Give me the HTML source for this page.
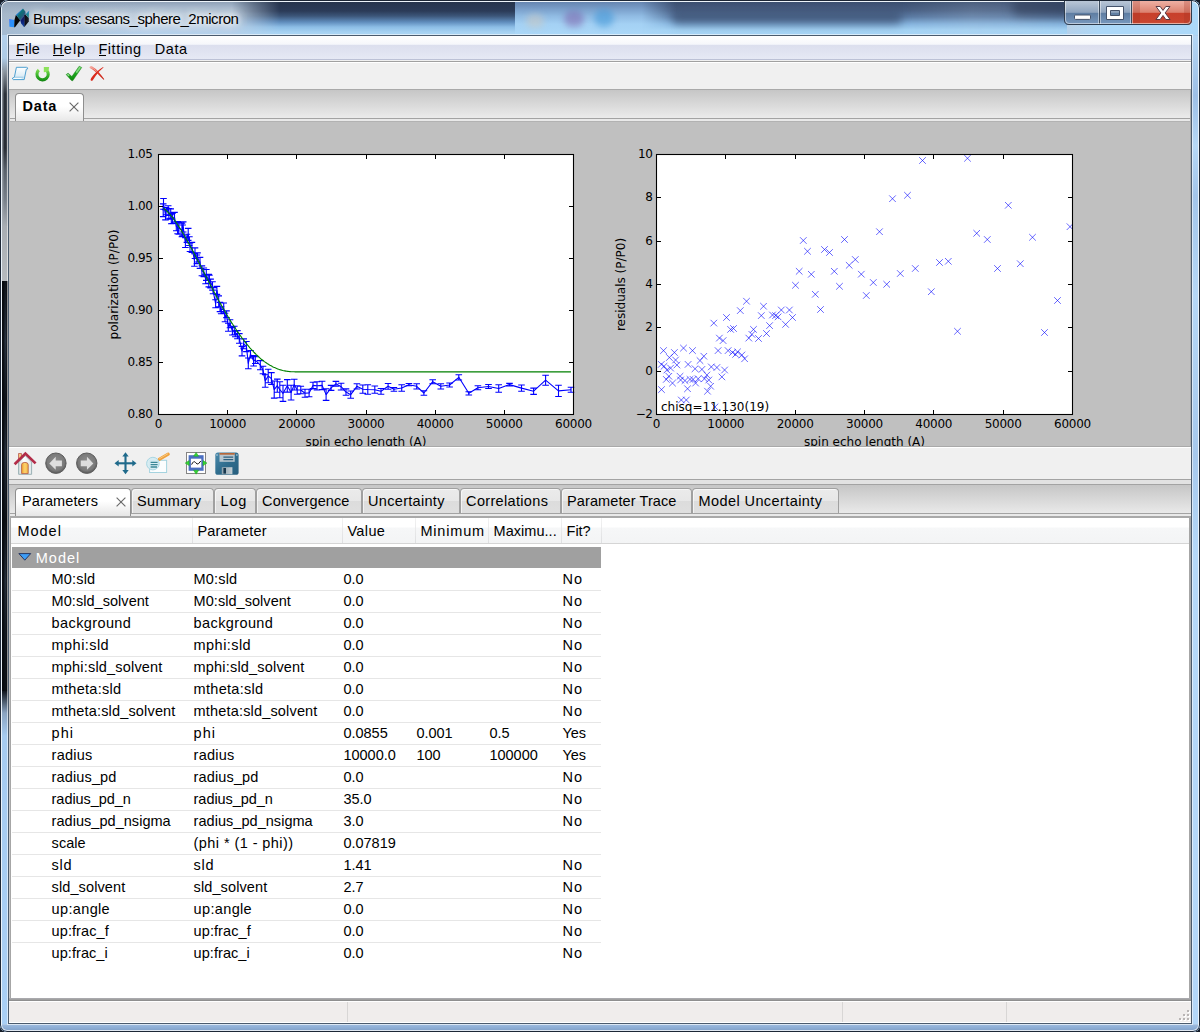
<!DOCTYPE html>
<html lang="en"><head><meta charset="utf-8"><title>Bumps: sesans_sphere_2micron</title>
<style>
*{box-sizing:border-box;margin:0;padding:0}
html,body{width:1200px;height:1032px;overflow:hidden;background:#151c28}
body{position:relative;font-family:"Liberation Sans", sans-serif;font-size:14.5px;color:#000}
.a{position:absolute}
.t{position:absolute;white-space:pre;line-height:20px;height:20px}
#win{left:0;top:0;width:1200px;height:1032px;border-radius:8px 8px 7px 7px;background:#b3d0ec;overflow:hidden}
#glass{left:0;top:0;width:1200px;height:1032px;
 background:
  linear-gradient(to bottom, rgba(255,255,255,.0) 0, rgba(255,255,255,0) 100%),
  linear-gradient(to right, #a9cbee 0, #bcd6ee 8px, #bcd6ee 1192px, #a9cbee 1200px);}
#edge{left:0;top:0;width:1200px;height:1032px;border-radius:8px 8px 7px 7px;border:1px solid #1d2736;box-shadow:inset 0 0 0 1px rgba(255,255,255,.75)}
#cli{left:8px;top:35px;width:1184px;height:989px;border:1px solid #4b5b6d;background:#f0f0f0;box-shadow:0 0 0 1px rgba(255,255,255,.55)}
</style></head>
<body>
<div id="win" class="a">
<div id="glass" class="a"></div>
<div class="a" id="tb" style="left:2px;top:2px;width:1196px;height:33px;overflow:hidden"><div class="a" style="left:0;top:0;width:1196px;height:33px;background:linear-gradient(to bottom,#8fa1b7 0,#a5b7cb 5px,#b9cadb 12px,#bcd0e3 22px,#b4d1ec 33px)"></div><div class="a" style="left:0;top:0;width:300px;height:33px;background:linear-gradient(to right,rgba(150,168,188,.55) 0,rgba(190,205,222,0) 140px)"></div><div class="a" style="left:230px;top:0;width:283px;height:33px;background:linear-gradient(to bottom,#26344c 0,#2b3b58 9px,#3c5679 14px,#5f8cbc 20px,#8cbde6 25px,#a6d2f2 30px,#acd6f4 33px);-webkit-mask-image:linear-gradient(to right,transparent 0,rgba(0,0,0,.5) 22px,#000 48px,#000 100%);mask-image:linear-gradient(to right,transparent 0,rgba(0,0,0,.5) 22px,#000 48px,#000 100%)"></div><div class="a" style="left:513px;top:0;width:160px;height:33px;background:linear-gradient(to bottom,#6685b0 0,#7a9fca 7px,#90bbe3 14px,#a4d1f4 22px,#abd8f8 33px)"></div><div class="a" style="left:1060px;top:0;width:136px;height:33px;background:linear-gradient(to right,rgba(172,216,248,0) 0,#acd8f8 40px)"></div><div class="a" style="left:562px;top:9px;width:20px;height:16px;border-radius:8px;background:rgba(120,80,160,.45);filter:blur(3px)"></div><div class="a" style="left:592px;top:7px;width:20px;height:18px;border-radius:9px;background:rgba(60,150,215,.55);filter:blur(3px)"></div><div class="a" style="left:524px;top:12px;width:18px;height:14px;border-radius:7px;background:rgba(205,200,190,.5);filter:blur(3px)"></div><div class="a" style="left:640px;top:0;width:425px;height:33px;background:linear-gradient(to bottom,#3c4f70 0,#475d81 8px,#5a7aa3 15px,#84b2dc 22px,#a3d2f3 28px,#a8d5f5 33px);-webkit-mask-image:linear-gradient(to right,transparent 0,#000 34px,#000 260px,rgba(0,0,0,.8) 330px,rgba(0,0,0,.85) 380px,#000 425px);mask-image:linear-gradient(to right,transparent 0,#000 34px,#000 260px,rgba(0,0,0,.8) 330px,rgba(0,0,0,.85) 380px,#000 425px)"></div><div class="a" style="left:670px;top:9px;width:230px;height:13px;border-radius:6px;background:rgba(60,80,112,.7);filter:blur(4px)"></div><div class="a" style="left:1010px;top:-4px;width:60px;height:18px;border-radius:8px;background:rgba(45,58,85,.6);filter:blur(5px)"></div></div>
<div class="a" style="left:2px;top:36px;width:6px;height:988px;overflow:hidden"><div class="a" style="left:0;top:0;width:6px;height:245px;background:linear-gradient(to bottom,#b3d0ec 0,#aecbe6 22px,#8a949e 36px,#2c323a 58px,#272c34 112px,#59616b 134px,#78808a 164px,#a8adb3 190px,#b6babe 245px)"></div><div class="a" style="left:0;top:34px;width:6px;height:156px;background:linear-gradient(to right,rgba(165,172,180,.85) 0,rgba(165,172,180,0) 38%,rgba(165,172,180,0) 68%,rgba(150,158,166,.8) 100%)"></div><div class="a" style="left:0;top:245px;width:6px;height:410px;background:linear-gradient(to right,#0a0d12 0,#0d1118 25%,#2b3644 55%,#0f141b 85%,#0a0d12 100%)"></div><div class="a" style="left:0;top:245px;width:6px;height:410px;background:linear-gradient(to bottom,rgba(5,8,12,.7) 0,rgba(5,8,12,0) 60px,rgba(5,8,12,.75) 120px,rgba(5,8,12,.1) 170px,rgba(5,8,12,.8) 240px,rgba(5,8,12,.1) 300px,rgba(5,8,12,.6) 350px,rgba(5,8,12,.8) 410px)"></div><div class="a" style="left:0;top:655px;width:6px;height:333px;background:linear-gradient(to bottom,#10151d 0,#8aa3c0 22px,#a6cbf0 45px,#a9cff5 100%)"></div></div>
<div class="a" style="left:1192px;top:36px;width:6px;height:988px;background:linear-gradient(to bottom,#b4d6f4 0,#9dbfe6 60px,#b6d8f6 110px,#a3c5ea 160px,#b5d7f6 260px,#a6c8ec 420px,#b5d8f8 520px,#b3d6f8 100%)"></div>
<div class="a" style="left:2px;top:1024px;width:1196px;height:7px;background:linear-gradient(to bottom,#c4d9ee 0,#9bb9dd 1px,#8fafd6 50%,#7f9fc6 100%)"></div>
<div id="edge" class="a"></div>
<div class="a" style="left:8px;top:7px;width:24px;height:24px"><svg width="24" height="24" viewBox="0 0 24 24" style="display:block;overflow:visible"><defs>
<linearGradient id="ai1" x1="0" y1="0" x2="1" y2="1"><stop offset="0" stop-color="#4b6ef6"/><stop offset=".35" stop-color="#2c8ffb"/><stop offset="1" stop-color="#2a93fa"/></linearGradient>
<linearGradient id="ai2" x1="0" y1="0" x2="1" y2="1"><stop offset="0" stop-color="#2380d8"/><stop offset=".28" stop-color="#2380d8"/><stop offset=".42" stop-color="#0f7076"/><stop offset=".62" stop-color="#1c5d78"/><stop offset=".82" stop-color="#55559a"/><stop offset="1" stop-color="#2a3b80"/></linearGradient>
<linearGradient id="ai3" x1="0" y1="0" x2="0" y2="1"><stop offset="0" stop-color="#1a1a50"/><stop offset=".5" stop-color="#0a1a70"/><stop offset="1" stop-color="#0b44a8"/></linearGradient>
<linearGradient id="ai4" x1="0" y1="0" x2="0" y2="1"><stop offset="0" stop-color="#2383d8"/><stop offset=".5" stop-color="#118088"/><stop offset="1" stop-color="#0e6f78"/></linearGradient>
</defs><polygon points="1.16,12.07 6.45,13.00 6.30,20.20 1.43,19.67" fill="url(#ai1)"/><polygon points="6.45,13.00 7.94,7.86 12.30,13.30 7.00,20.30 6.20,20.20" fill="#050508"/><polygon points="7.94,7.86 15.00,1.48 17.44,4.87 17.70,7.86 12.30,13.60" fill="url(#ai2)"/><polygon points="12.30,13.40 16.90,8.00 16.60,19.90 15.70,19.80 13.20,16.40" fill="url(#ai3)"/><polygon points="17.20,7.40 20.80,11.10 20.80,14.40 16.40,19.90 16.60,8.20" fill="#06060f"/><polygon points="17.70,7.20 20.56,3.90 21.00,4.60 20.80,11.30" fill="url(#ai4)"/></svg></div>
<span class="t" style="left:33.10px;top:8.80px;font-size:15px;color:#000;text-shadow:0 0 5px rgba(255,255,255,.95),0 0 9px rgba(255,255,255,.85),0 0 13px rgba(255,255,255,.7),0 0 16px rgba(255,255,255,.5);letter-spacing:-0.469px">Bumps: sesans_sphere_2micron</span>
<div class="a" style="left:1064px;top:1px;width:129px;height:25px"><svg width="129" height="25" viewBox="0 0 129 25" style="display:block;overflow:visible"><defs>
<linearGradient id="cb1" x1="0" y1="0" x2="0" y2="1"><stop offset="0" stop-color="#b9c6d6"/><stop offset=".45" stop-color="#8fa4be"/><stop offset=".5" stop-color="#5f7ea3"/><stop offset="1" stop-color="#7d9dc2"/></linearGradient>
<linearGradient id="cb2" x1="0" y1="0" x2="0" y2="1"><stop offset="0" stop-color="#eeb0a3"/><stop offset=".45" stop-color="#dc8270"/><stop offset=".5" stop-color="#c8402b"/><stop offset=".85" stop-color="#c9452f"/><stop offset="1" stop-color="#e08a6a"/></linearGradient>
<clipPath id="cbc"><path d="M0 0H128V19Q128 24 123 24H5Q0 24 0 19Z"/></clipPath>
</defs>
<g clip-path="url(#cbc)">
<rect x="0" y="0" width="36" height="25" fill="url(#cb1)"/>
<rect x="36" y="0" width="32" height="25" fill="url(#cb1)"/>
<rect x="68" y="0" width="61" height="25" fill="url(#cb2)"/>
<rect x="68" y="0" width="8" height="25" fill="#a03020" opacity=".25"/><rect x="120" y="0" width="8" height="25" fill="#a03020" opacity=".25"/>
</g>
<path d="M35.5 0V24M67.5 0V24" stroke="#3b4a5c" stroke-width="1" fill="none"/>
<path d="M36.5 0V23M34.5 0V23M68.5 0V23M66.5 0V23" stroke="rgba(255,255,255,.45)" stroke-width="1" fill="none"/>
<path d="M0.5 0V19Q0.5 23.5 5 23.5H123Q127.5 23.5 127.5 19V0" stroke="#2f3c4d" stroke-width="1" fill="none"/>
<path d="M1.5 0V19Q1.5 22.5 5 22.5H123Q126.5 22.5 126.5 19V0" stroke="rgba(255,255,255,.5)" stroke-width="1" fill="none"/>
<rect x="10.5" y="14" width="16" height="4.4" rx="1" fill="#fff" stroke="#44526a" stroke-width="1"/>
<path d="M42.5 5.5h17v13h-17zM46.5 9.5v5h9v-5z" fill="#fff" stroke="#44526a" stroke-width="1" fill-rule="evenodd"/>
<path d="M92 5.5h4.2l2.8 3.9 2.8-3.9h4.2l-4.8 6.4 4.9 6.6h-4.3l-2.8-4-2.8 4h-4.3l4.9-6.6z" fill="#fff" stroke="#5a3a44" stroke-width="1" stroke-linejoin="round"/>
</svg></div>
<div id="cli" class="a">
<div class="a" style="left:0px;top:0px;width:1182px;height:24px;background:linear-gradient(to bottom,#fff 0,#f6f7fb 8px,#e9ecf6 9px,#dcdfee 9px,#dfe2f0 14px,#e6e9f5 23px,#bcc1d6 23px,#bcc1d6 24px)"></div>
<div class="a" style="left:0px;top:24px;width:1182px;height:1px;background:#f0f0f0"></div>
<div class="a" style="left:0px;top:25px;width:1182px;height:1px;background:#a0a0a0"></div>
<div class="a" style="left:0px;top:26px;width:1182px;height:1px;background:#fff"></div>
<div class="a" style="left:0px;top:53px;width:1182px;height:1px;background:#a9a9a9"></div>
<div class="a" style="left:0px;top:54px;width:1181px;height:28px;background:linear-gradient(to bottom,#c6c6c6 0,#ebebeb 100%)"></div>
<div class="a" style="left:0px;top:82px;width:1181px;height:1px;background:#a3a3a3"></div>
<div class="a" style="left:0px;top:83px;width:1181px;height:2px;background:#e9e9e9"></div>
<div class="a" style="left:6px;top:57px;width:69px;height:28px;border:1px solid #8f8f8f;border-bottom:none;border-radius:4px 4px 0 0;background:linear-gradient(to bottom,#fff 0,#fff 45%,#e8e8e8 100%)"></div>
<div class="a" style="left:0px;top:85px;width:1182px;height:1px;background:#b2b2b2"></div>
<div class="a" style="left:0px;top:86px;width:1182px;height:324px;background:#c0c0c0"></div>
<div class="a" style="left:0px;top:54px;width:1px;height:356px;background:#bdbdbd"></div>
<div class="a" style="left:1181px;top:54px;width:1px;height:356px;background:#a9a9a9"></div>
<div class="a" style="left:0px;top:410px;width:1182px;height:1px;background:#a9a9a9"></div>
<div class="a" style="left:0px;top:411px;width:1182px;height:1px;background:#fff"></div>
<div class="a" style="left:0px;top:412px;width:1182px;height:31px;background:#f0f0f0"></div>
<div class="a" style="left:0px;top:443px;width:1182px;height:1px;background:#a3a3a3"></div>
<div class="a" style="left:0px;top:444px;width:1182px;height:4px;background:#e2e2e2"></div>
<div class="a" style="left:0px;top:448px;width:1182px;height:1px;background:#a3a3a3"></div>
<div class="a" style="left:0px;top:449px;width:1182px;height:28px;background:linear-gradient(to bottom,#c6c6c6 0,#e9e9e9 100%)"></div>
<div class="a" style="left:0px;top:477px;width:1182px;height:1px;background:#a3a3a3"></div>
<div class="a" style="left:0px;top:478px;width:1182px;height:2px;background:#e9e9e9"></div>
<div class="a" style="left:0px;top:480px;width:1182px;height:2px;background:#a9a9a9"></div>
<div class="a" style="left:6px;top:452px;width:116px;height:28px;border:1px solid #8f8f8f;border-bottom:none;border-radius:4px 4px 0 0;background:linear-gradient(to bottom,#fff 0,#fff 45%,#e6e6e6 100%)"></div>
<div class="a" style="left:122px;top:452px;width:83px;height:25px;border:1px solid #a0a0a0;border-bottom:none;border-radius:4px 4px 0 0;box-shadow:inset 1px 1px 0 rgba(255,255,255,.6);background:linear-gradient(to bottom,#ebebeb 0,#e7e7e7 50%,#dcdcdc 50%,#dfdfdf 100%)"></div>
<div class="a" style="left:205px;top:452px;width:42px;height:25px;border:1px solid #a0a0a0;border-bottom:none;border-radius:4px 4px 0 0;box-shadow:inset 1px 1px 0 rgba(255,255,255,.6);background:linear-gradient(to bottom,#ebebeb 0,#e7e7e7 50%,#dcdcdc 50%,#dfdfdf 100%)"></div>
<div class="a" style="left:247px;top:452px;width:106px;height:25px;border:1px solid #a0a0a0;border-bottom:none;border-radius:4px 4px 0 0;box-shadow:inset 1px 1px 0 rgba(255,255,255,.6);background:linear-gradient(to bottom,#ebebeb 0,#e7e7e7 50%,#dcdcdc 50%,#dfdfdf 100%)"></div>
<div class="a" style="left:353px;top:452px;width:98px;height:25px;border:1px solid #a0a0a0;border-bottom:none;border-radius:4px 4px 0 0;box-shadow:inset 1px 1px 0 rgba(255,255,255,.6);background:linear-gradient(to bottom,#ebebeb 0,#e7e7e7 50%,#dcdcdc 50%,#dfdfdf 100%)"></div>
<div class="a" style="left:451px;top:452px;width:101px;height:25px;border:1px solid #a0a0a0;border-bottom:none;border-radius:4px 4px 0 0;box-shadow:inset 1px 1px 0 rgba(255,255,255,.6);background:linear-gradient(to bottom,#ebebeb 0,#e7e7e7 50%,#dcdcdc 50%,#dfdfdf 100%)"></div>
<div class="a" style="left:552px;top:452px;width:131px;height:25px;border:1px solid #a0a0a0;border-bottom:none;border-radius:4px 4px 0 0;box-shadow:inset 1px 1px 0 rgba(255,255,255,.6);background:linear-gradient(to bottom,#ebebeb 0,#e7e7e7 50%,#dcdcdc 50%,#dfdfdf 100%)"></div>
<div class="a" style="left:683px;top:452px;width:147px;height:25px;border:1px solid #a0a0a0;border-bottom:none;border-radius:4px 4px 0 0;box-shadow:inset 1px 1px 0 rgba(255,255,255,.6);background:linear-gradient(to bottom,#ebebeb 0,#e7e7e7 50%,#dcdcdc 50%,#dfdfdf 100%)"></div>
<div class="a" style="left:0px;top:482px;width:1182px;height:482px;background:#a6a6a6"></div>
<div class="a" style="left:0px;top:449px;width:1px;height:515px;background:#c4c4c4"></div>
<div class="a" style="left:2px;top:482px;width:1178px;height:480px;background:#fff"></div>
<div class="a" style="left:2px;top:482px;width:1178px;height:25px;background:linear-gradient(to bottom,#fff 0,#fff 9px,#f6f7f8 10px,#f3f4f5 100%)"></div>
<div class="a" style="left:2px;top:507px;width:1178px;height:1px;background:#d5d5d5"></div>
<div class="a" style="left:183px;top:482px;width:1px;height:25px;background:linear-gradient(to bottom,#f2f2f2,#dedfe1)"></div>
<div class="a" style="left:333px;top:482px;width:1px;height:25px;background:linear-gradient(to bottom,#f2f2f2,#dedfe1)"></div>
<div class="a" style="left:406px;top:482px;width:1px;height:25px;background:linear-gradient(to bottom,#f2f2f2,#dedfe1)"></div>
<div class="a" style="left:479px;top:482px;width:1px;height:25px;background:linear-gradient(to bottom,#f2f2f2,#dedfe1)"></div>
<div class="a" style="left:552px;top:482px;width:1px;height:25px;background:linear-gradient(to bottom,#f2f2f2,#dedfe1)"></div>
<div class="a" style="left:592px;top:482px;width:1px;height:25px;background:linear-gradient(to bottom,#f2f2f2,#dedfe1)"></div>
<div class="a" style="left:3px;top:511px;width:589px;height:21px;background:#a0a0a0"></div>
<div class="a" style="left:3px;top:554px;width:589px;height:1px;background:#e6e6e6"></div>
<div class="a" style="left:3px;top:576px;width:589px;height:1px;background:#e6e6e6"></div>
<div class="a" style="left:3px;top:598px;width:589px;height:1px;background:#e6e6e6"></div>
<div class="a" style="left:3px;top:620px;width:589px;height:1px;background:#e6e6e6"></div>
<div class="a" style="left:3px;top:642px;width:589px;height:1px;background:#e6e6e6"></div>
<div class="a" style="left:3px;top:664px;width:589px;height:1px;background:#e6e6e6"></div>
<div class="a" style="left:3px;top:686px;width:589px;height:1px;background:#e6e6e6"></div>
<div class="a" style="left:3px;top:708px;width:589px;height:1px;background:#e6e6e6"></div>
<div class="a" style="left:3px;top:730px;width:589px;height:1px;background:#e6e6e6"></div>
<div class="a" style="left:3px;top:752px;width:589px;height:1px;background:#e6e6e6"></div>
<div class="a" style="left:3px;top:774px;width:589px;height:1px;background:#e6e6e6"></div>
<div class="a" style="left:3px;top:796px;width:589px;height:1px;background:#e6e6e6"></div>
<div class="a" style="left:3px;top:818px;width:589px;height:1px;background:#e6e6e6"></div>
<div class="a" style="left:3px;top:840px;width:589px;height:1px;background:#e6e6e6"></div>
<div class="a" style="left:3px;top:862px;width:589px;height:1px;background:#e6e6e6"></div>
<div class="a" style="left:3px;top:884px;width:589px;height:1px;background:#e6e6e6"></div>
<div class="a" style="left:3px;top:906px;width:589px;height:1px;background:#e6e6e6"></div>
<div class="a" style="left:0px;top:962px;width:1182px;height:1px;background:#a9a9ad"></div>
<div class="a" style="left:0px;top:963px;width:1182px;height:1px;background:#a0a0a0"></div>
<div class="a" style="left:0px;top:964px;width:1182px;height:1px;background:#8f8f8f"></div>
<div class="a" style="left:0px;top:965px;width:1182px;height:1px;background:#fff"></div>
<div class="a" style="left:0px;top:966px;width:1182px;height:20px;background:#f0edec"></div>
<div class="a" style="left:0px;top:986px;width:1182px;height:1px;background:#fff"></div>
<div class="a" style="left:338px;top:966px;width:1px;height:20px;background:#d8d6d5"></div>
<div class="a" style="left:833px;top:966px;width:1px;height:20px;background:#d8d6d5"></div>
<div class="a" style="left:997px;top:966px;width:1px;height:20px;background:#d8d6d5"></div>
<div class="a" style="left:1168px;top:973px;width:13px;height:13px"><svg width="13" height="13" viewBox="0 0 13 13" style="display:block;overflow:visible"><rect x="11" y="2" width="2" height="2" fill="#fff"/><rect x="10" y="1" width="2" height="2" fill="#b9b5b4"/><rect x="7" y="6" width="2" height="2" fill="#fff"/><rect x="6" y="5" width="2" height="2" fill="#b9b5b4"/><rect x="11" y="6" width="2" height="2" fill="#fff"/><rect x="10" y="5" width="2" height="2" fill="#b9b5b4"/><rect x="3" y="10" width="2" height="2" fill="#fff"/><rect x="2" y="9" width="2" height="2" fill="#b9b5b4"/><rect x="7" y="10" width="2" height="2" fill="#fff"/><rect x="6" y="9" width="2" height="2" fill="#b9b5b4"/><rect x="11" y="10" width="2" height="2" fill="#fff"/><rect x="10" y="9" width="2" height="2" fill="#b9b5b4"/></svg></div>
</div>
<span class="t" style="left:16.10px;top:38.98px;font-size:14.5px;color:#000;;letter-spacing:0.142px">File</span>
<span class="t" style="left:52.40px;top:38.98px;font-size:14.5px;color:#000;;letter-spacing:0.991px">Help</span>
<span class="t" style="left:98.40px;top:38.98px;font-size:14.5px;color:#000;;letter-spacing:0.550px">Fitting</span>
<span class="t" style="left:154.80px;top:38.98px;font-size:14.5px;color:#000;;letter-spacing:0.553px">Data</span>
<div class="a" style="left:16px;top:55px;width:7px;height:1px;background:#000"></div>
<div class="a" style="left:53px;top:55px;width:11px;height:1px;background:#000"></div>
<div class="a" style="left:99px;top:55px;width:7px;height:1px;background:#000"></div>
<div class="a" style="left:12px;top:65px;width:100px;height:20px"><svg width="100" height="20" viewBox="0 0 100 20" style="display:block;overflow:visible"><defs>
<linearGradient id="sc1" x1="0" y1="0" x2="0" y2="1"><stop offset="0" stop-color="#fff"/><stop offset="1" stop-color="#cfe6f3"/></linearGradient>
<linearGradient id="gr1" x1="0" y1="0" x2="0" y2="1"><stop offset="0" stop-color="#8be25a"/><stop offset=".5" stop-color="#3bb52c"/><stop offset="1" stop-color="#118511"/></linearGradient>
<linearGradient id="gr2" x1="0" y1="0" x2="0" y2="1"><stop offset="0" stop-color="#5fd05a"/><stop offset=".4" stop-color="#1fae1f"/><stop offset="1" stop-color="#0d8a0d"/></linearGradient>
<linearGradient id="rd1" x1="0" y1="0" x2="1" y2="1"><stop offset="0" stop-color="#f5a79c"/><stop offset=".5" stop-color="#e03a2a"/><stop offset="1" stop-color="#c21c10"/></linearGradient>
</defs><path d="M4.40 2.30H14.50Q15.90 2.30 15.60 3.90L14.30 4.20L12.20 14.60H1.20Q0.20 14.20 0.60 13.00L2.40 12.20Z" fill="url(#sc1)" stroke="#4d9fd0" stroke-width="1" stroke-linejoin="round"/><path d="M1.40 13.40H9.50" stroke="#fff" stroke-width="1" fill="none"/><path d="M2.40 12.20H11.60" stroke="#8cc3e2" stroke-width=".8" fill="none"/><path d="M25.78 3.85A7.2 7.2 0 1 0 35.95 4.38L33.01 5.88A4.1 4.1 0 1 1 27.86 6.15Z" fill="url(#gr1)"/><polygon points="31.80 1.90 37.10 1.90 36.60 5.60 34.00 7.00 31.80 7.20" fill="#8ce25a"/><path d="M54.20 9.60L56.10 8.20L59.90 11.50L67.20 1.20L69.70 2.50L60.70 15.80L59.20 15.30Z" fill="url(#gr2)" stroke="#0c7a0c" stroke-width=".5" stroke-linejoin="round"/><path d="M63.60 7.00L67.60 1.90L68.90 2.60L65.00 8.20Z" fill="#9be69a" opacity=".75"/><path d="M54.90 9.50L56.00 8.80L57.60 10.30L56.60 11.20Z" fill="#b5efb2" opacity=".8"/><path d="M77.50 1.90Q78.40 0.90 79.90 1.20Q83.50 3.20 86.40 6.80Q89.80 10.80 92.30 14.30L91.60 14.80Q88.00 11.20 84.80 8.00Q81.00 4.40 77.80 2.90Z" fill="url(#rd1)"/><path d="M91.10 1.90L91.50 2.60Q86.60 6.60 83.60 11.00Q81.80 13.80 80.60 15.40Q79.60 16.20 78.80 15.50Q78.20 14.60 79.20 13.00Q83.60 6.40 91.10 1.90Z" fill="#da2a1c"/><path d="M78.00 2.00Q81.80 3.00 85.20 6.80" fill="none" stroke="#f6aaa0" stroke-width="1" opacity=".9"/></svg></div>
<span class="t" style="left:22.40px;top:95.98px;font-size:14.5px;color:#000;font-weight:bold;letter-spacing:0.854px">Data</span>
<div class="a" style="left:67px;top:100px;width:14px;height:14px"><svg width="14" height="14" viewBox="0 0 14 14" style="display:block;overflow:visible"><path d="M2.6 2.6L11.4 11.4M11.4 2.6L2.6 11.4" stroke="#6a6a6a" stroke-width="1.15" fill="none"/></svg></div>
<svg width="1180" height="324" viewBox="10 122 1180 324" style="position:absolute;left:10px;top:122px;overflow:hidden">
<rect x="10" y="122" width="1180" height="324" fill="#c0c0c0"/>
<rect x="158.5" y="154.5" width="415.0" height="260.0" fill="#fff"/>
<rect x="656.5" y="154.5" width="416.0" height="260.0" fill="#fff"/>
<g fill="none" stroke="#0000ff" stroke-width="1.1">
<polyline points="163.2,210.2 163.5,203.8 165.5,214.7 166.0,211.1 168.2,210.6 168.9,213.4 170.7,214.0 171.3,218.9 172.6,218.3 174.5,217.3 176.3,226.4 177.6,227.7 178.8,228.2 181.9,229.9 182.6,230.4 183.2,227.0 185.4,242.7 186.9,238.4 188.2,234.4 189.4,241.1 190.0,247.2 191.9,247.4 194.4,260.0 195.0,253.2 196.9,259.3 197.5,257.5 200.0,262.9 201.9,270.8 203.8,272.4 205.6,278.9 206.3,275.0 208.8,280.6 209.4,279.2 210.6,283.5 212.5,285.9 213.1,290.6 215.6,303.7 216.9,290.4 218.7,301.3 220.0,307.0 221.2,310.3 223.7,308.0 225.0,317.5 226.5,314.2 228.3,327.3 230.0,323.7 232.4,331.2 234.3,330.5 235.3,333.9 237.4,334.6 239.3,338.5 242.0,351.2 243.7,343.8 246.4,346.6 248.3,363.4 250.5,354.2 253.6,360.8 255.3,360.1 260.3,365.2 263.0,370.1 265.2,381.0 268.2,376.0 271.4,378.6 274.2,389.6 277.3,385.7 279.8,389.7 283.0,393.3 287.3,385.8 291.1,392.6 294.2,384.6 297.2,390.0 300.8,390.0 305.0,393.3 309.1,392.9 313.0,385.4 317.0,385.8 322.1,385.4 326.1,394.6 331.1,387.9 335.9,383.8 341.1,386.7 346.0,392.1 350.7,394.7 356.9,386.3 362.8,389.2 367.8,389.5 374.8,389.7 381.0,391.3 388.1,386.3 393.9,389.3 401.7,388.0 408.9,384.7 416.7,386.3 423.9,393.0 432.7,381.7 440.8,386.3 449.6,385.0 458.8,377.3 468.8,393.3 477.9,387.8 488.5,386.5 498.7,388.5 509.5,384.6 521.5,388.1 533.6,391.2 545.6,380.2 558.5,390.9 571.0,389.8" stroke-linejoin="round"/>
<path d="M163.2 203.9V216.6M159.9 203.9h6.6M159.9 216.6h6.6M163.5 198.5V209.2M160.2 198.5h6.6M160.2 209.2h6.6M165.5 209.6V219.9M162.2 209.6h6.6M162.2 219.9h6.6M166.0 207.5V214.8M162.7 207.5h6.6M162.7 214.8h6.6M168.2 205.7V215.5M164.9 205.7h6.6M164.9 215.5h6.6M168.9 208.5V218.2M165.6 208.5h6.6M165.6 218.2h6.6M170.7 208.9V219.1M167.4 208.9h6.6M167.4 219.1h6.6M171.3 214.2V223.7M168.0 214.2h6.6M168.0 223.7h6.6M172.6 213.1V223.5M169.3 213.1h6.6M169.3 223.5h6.6M174.5 212.4V222.2M171.2 212.4h6.6M171.2 222.2h6.6M176.3 222.1V230.7M173.0 222.1h6.6M173.0 230.7h6.6M177.6 221.6V233.8M174.3 221.6h6.6M174.3 233.8h6.6M178.8 222.1V234.3M175.5 222.1h6.6M175.5 234.3h6.6M181.9 223.2V236.7M178.6 223.2h6.6M178.6 236.7h6.6M182.6 225.0V235.8M179.3 225.0h6.6M179.3 235.8h6.6M183.2 221.9V232.0M179.9 221.9h6.6M179.9 232.0h6.6M185.4 237.8V247.5M182.1 237.8h6.6M182.1 247.5h6.6M186.9 234.3V242.4M183.6 234.3h6.6M183.6 242.4h6.6M188.2 228.4V240.4M184.9 228.4h6.6M184.9 240.4h6.6M189.4 236.8V245.5M186.1 236.8h6.6M186.1 245.5h6.6M190.0 242.9V251.5M186.7 242.9h6.6M186.7 251.5h6.6M191.9 242.4V252.4M188.6 242.4h6.6M188.6 252.4h6.6M194.4 253.7V266.2M191.1 253.7h6.6M191.1 266.2h6.6M195.0 247.9V258.5M191.7 247.9h6.6M191.7 258.5h6.6M196.9 255.0V263.6M193.6 255.0h6.6M193.6 263.6h6.6M197.5 252.9V262.0M194.2 252.9h6.6M194.2 262.0h6.6M200.0 257.4V268.4M196.7 257.4h6.6M196.7 268.4h6.6M201.9 265.9V275.7M198.6 265.9h6.6M198.6 275.7h6.6M203.8 268.0V276.8M200.5 268.0h6.6M200.5 276.8h6.6M205.6 274.2V283.7M202.3 274.2h6.6M202.3 283.7h6.6M206.3 269.5V280.4M203.0 269.5h6.6M203.0 280.4h6.6M208.8 274.2V286.9M205.5 274.2h6.6M205.5 286.9h6.6M209.4 275.3V283.2M206.1 275.3h6.6M206.1 283.2h6.6M210.6 279.1V287.9M207.3 279.1h6.6M207.3 287.9h6.6M212.5 281.7V290.1M209.2 281.7h6.6M209.2 290.1h6.6M213.1 287.6V293.7M209.8 287.6h6.6M209.8 293.7h6.6M215.6 299.7V307.8M212.3 299.7h6.6M212.3 307.8h6.6M216.9 286.4V294.4M213.6 286.4h6.6M213.6 294.4h6.6M218.7 295.9V306.8M215.4 295.9h6.6M215.4 306.8h6.6M220.0 302.4V311.6M216.7 302.4h6.6M216.7 311.6h6.6M221.2 306.8V313.7M217.9 306.8h6.6M217.9 313.7h6.6M223.7 303.0V313.0M220.4 303.0h6.6M220.4 313.0h6.6M225.0 313.3V321.8M221.7 313.3h6.6M221.7 321.8h6.6M226.5 310.9V317.6M223.2 310.9h6.6M223.2 317.6h6.6M228.3 323.2V331.3M225.0 323.2h6.6M225.0 331.3h6.6M230.0 319.7V327.7M226.7 319.7h6.6M226.7 327.7h6.6M232.4 327.4V335.0M229.1 327.4h6.6M229.1 335.0h6.6M234.3 326.2V334.9M231.0 326.2h6.6M231.0 334.9h6.6M235.3 331.1V336.8M232.0 331.1h6.6M232.0 336.8h6.6M237.4 330.6V338.7M234.1 330.6h6.6M234.1 338.7h6.6M239.3 333.6V343.3M236.0 333.6h6.6M236.0 343.3h6.6M242.0 346.4V355.9M238.7 346.4h6.6M238.7 355.9h6.6M243.7 338.9V348.8M240.4 338.9h6.6M240.4 348.8h6.6M246.4 341.5V351.6M243.1 341.5h6.6M243.1 351.6h6.6M248.3 358.0V368.8M245.0 358.0h6.6M245.0 368.8h6.6M250.5 350.5V358.0M247.2 350.5h6.6M247.2 358.0h6.6M253.6 355.6V366.0M250.3 355.6h6.6M250.3 366.0h6.6M255.3 356.7V363.5M252.0 356.7h6.6M252.0 363.5h6.6M260.3 360.6V369.7M257.0 360.6h6.6M257.0 369.7h6.6M263.0 366.3V373.8M259.7 366.3h6.6M259.7 373.8h6.6M265.2 374.7V387.2M261.9 374.7h6.6M261.9 387.2h6.6M268.2 369.2V382.7M264.9 369.2h6.6M264.9 382.7h6.6M271.4 372.6V384.5M268.1 372.6h6.6M268.1 384.5h6.6M274.2 381.0V398.1M270.9 381.0h6.6M270.9 398.1h6.6M277.3 379.1V392.3M274.0 379.1h6.6M274.0 392.3h6.6M279.8 381.7V397.7M276.5 381.7h6.6M276.5 397.7h6.6M283.0 385.2V401.4M279.7 385.2h6.6M279.7 401.4h6.6M287.3 379.6V392.1M284.0 379.6h6.6M284.0 392.1h6.6M291.1 385.2V400.0M287.8 385.2h6.6M287.8 400.0h6.6M294.2 379.2V390.0M290.9 379.2h6.6M290.9 390.0h6.6M297.2 385.8V394.2M293.9 385.8h6.6M293.9 394.2h6.6M300.8 386.2V393.8M297.5 386.2h6.6M297.5 393.8h6.6M305.0 389.3V397.3M301.7 389.3h6.6M301.7 397.3h6.6M309.1 389.2V396.7M305.8 389.2h6.6M305.8 396.7h6.6M313.0 382.2V388.6M309.7 382.2h6.6M309.7 388.6h6.6M317.0 381.7V390.0M313.7 381.7h6.6M313.7 390.0h6.6M322.1 381.2V389.6M318.8 381.2h6.6M318.8 389.6h6.6M326.1 388.8V400.4M322.8 388.8h6.6M322.8 400.4h6.6M331.1 385.4V390.4M327.8 385.4h6.6M327.8 390.4h6.6M335.9 381.4V386.1M332.6 381.4h6.6M332.6 386.1h6.6M341.1 383.3V390.0M337.8 383.3h6.6M337.8 390.0h6.6M346.0 388.9V395.2M342.7 388.9h6.6M342.7 395.2h6.6M350.7 391.0V398.3M347.4 391.0h6.6M347.4 398.3h6.6M356.9 383.7V389.0M353.6 383.7h6.6M353.6 389.0h6.6M362.8 385.0V393.3M359.5 385.0h6.6M359.5 393.3h6.6M367.8 384.8V394.2M364.5 384.8h6.6M364.5 394.2h6.6M374.8 386.0V393.3M371.5 386.0h6.6M371.5 393.3h6.6M381.0 388.5V394.2M377.7 388.5h6.6M377.7 394.2h6.6M388.1 383.5V389.2M384.8 383.5h6.6M384.8 389.2h6.6M393.9 387.5V391.2M390.6 387.5h6.6M390.6 391.2h6.6M401.7 384.7V391.3M398.4 384.7h6.6M398.4 391.3h6.6M408.9 383.5V385.8M405.6 383.5h6.6M405.6 385.8h6.6M416.7 383.7V389.0M413.4 383.7h6.6M413.4 389.0h6.6M423.9 390.8V395.2M420.6 390.8h6.6M420.6 395.2h6.6M432.7 379.7V383.7M429.4 379.7h6.6M429.4 383.7h6.6M440.8 383.7V389.0M437.5 383.7h6.6M437.5 389.0h6.6M449.6 383.0V387.0M446.3 383.0h6.6M446.3 387.0h6.6M458.8 374.7V380.0M455.5 374.7h6.6M455.5 380.0h6.6M468.8 391.7V395.0M465.5 391.7h6.6M465.5 395.0h6.6M477.9 385.8V389.8M474.6 385.8h6.6M474.6 389.8h6.6M488.5 384.5V388.5M485.2 384.5h6.6M485.2 388.5h6.6M498.7 384.8V392.2M495.4 384.8h6.6M495.4 392.2h6.6M509.5 383.4V385.9M506.2 383.4h6.6M506.2 385.9h6.6M521.5 385.0V391.2M518.2 385.0h6.6M518.2 391.2h6.6M533.6 388.1V394.4M530.3 388.1h6.6M530.3 394.4h6.6M545.6 375.2V385.2M542.3 375.2h6.6M542.3 385.2h6.6M558.5 385.3V396.5M555.2 385.3h6.6M555.2 396.5h6.6M571.0 387.2V392.2M567.7 387.2h6.6M567.7 392.2h6.6"/>
</g>
<polyline points="163.2,208.2 164.3,208.9 165.3,209.7 166.3,210.6 167.3,211.5 168.3,212.6 169.4,213.7 170.4,214.8 171.4,216.1 172.4,217.3 173.5,218.7 174.5,220.1 175.5,221.5 176.5,223.0 177.5,224.5 178.6,226.1 179.6,227.7 180.6,229.3 181.6,231.0 182.7,232.7 183.7,234.5 184.7,236.2 185.7,238.0 186.7,239.8 187.8,241.7 188.8,243.5 189.8,245.4 190.8,247.3 191.9,249.2 192.9,251.1 193.9,253.0 194.9,255.0 195.9,256.9 197.0,258.9 198.0,260.9 199.0,262.8 200.0,264.8 201.1,266.8 202.1,268.8 203.1,270.7 204.1,272.7 205.1,274.7 206.2,276.7 207.2,278.7 208.2,280.6 209.2,282.6 210.2,284.6 211.3,286.5 212.3,288.4 213.3,290.4 214.3,292.3 215.4,294.2 216.4,296.1 217.4,298.0 218.4,299.9 219.4,301.7 220.5,303.6 221.5,305.4 222.5,307.2 223.5,309.0 224.6,310.8 225.6,312.6 226.6,314.3 227.6,316.0 228.6,317.7 229.7,319.4 230.7,321.1 231.7,322.7 232.7,324.3 233.8,325.9 234.8,327.5 235.8,329.0 236.8,330.6 237.8,332.1 238.9,333.5 239.9,335.0 240.9,336.4 241.9,337.8 243.0,339.2 244.0,340.5 245.0,341.9 246.0,343.2 247.0,344.4 248.1,345.7 249.1,346.9 250.1,348.1 251.1,349.2 252.2,350.3 253.2,351.4 254.2,352.5 255.2,353.5 256.2,354.6 257.3,355.5 258.3,356.5 259.3,357.4 260.3,358.3 261.3,359.2 262.4,360.0 263.4,360.8 264.4,361.6 265.4,362.3 266.5,363.0 267.5,363.7 268.5,364.3 269.5,365.0 270.5,365.6 271.6,366.1 272.6,366.7 273.6,367.2 274.6,367.6 275.7,368.1 276.7,368.5 277.7,368.9 278.7,369.3 279.7,369.6 280.8,369.9 281.8,370.2 282.8,370.5 283.8,370.7 284.9,370.9 285.9,371.1 286.9,371.3 287.9,371.4 288.9,371.5 290.0,371.6 291.0,371.7 292.0,371.8 293.0,371.8 294.1,371.8 295.1,371.9 296.1,371.9 297.1,371.9 298.1,371.9 299.2,371.9 300.2,371.9 301.2,371.9 302.2,371.9 303.2,371.9 304.3,371.9 305.3,371.9 306.3,371.9 307.3,371.9 308.4,371.9 309.4,371.9 310.4,371.9 311.4,371.9 312.4,371.9 313.5,371.9 314.5,371.9 315.5,371.9 316.5,371.9 317.6,371.9 318.6,371.9 319.6,371.9 320.6,371.9 321.6,371.9 322.7,371.9 323.7,371.9 324.7,371.9 325.7,371.9 326.8,371.9 327.8,371.9 328.8,371.9 329.8,371.9 330.8,371.9 331.9,371.9 332.9,371.9 333.9,371.9 334.9,371.9 336.0,371.9 337.0,371.9 338.0,371.9 339.0,371.9 340.0,371.9 341.1,371.9 342.1,371.9 343.1,371.9 344.1,371.9 345.1,371.9 346.2,371.9 347.2,371.9 348.2,371.9 349.2,371.9 350.3,371.9 351.3,371.9 352.3,371.9 353.3,371.9 354.3,371.9 355.4,371.9 356.4,371.9 357.4,371.9 358.4,371.9 359.5,371.9 360.5,371.9 361.5,371.9 362.5,371.9 363.5,371.9 364.6,371.9 365.6,371.9 366.6,371.9 367.6,371.9 368.7,371.9 369.7,371.9 370.7,371.9 371.7,371.9 372.7,371.9 373.8,371.9 374.8,371.9 375.8,371.9 376.8,371.9 377.9,371.9 378.9,371.9 379.9,371.9 380.9,371.9 381.9,371.9 383.0,371.9 384.0,371.9 385.0,371.9 386.0,371.9 387.1,371.9 388.1,371.9 389.1,371.9 390.1,371.9 391.1,371.9 392.2,371.9 393.2,371.9 394.2,371.9 395.2,371.9 396.2,371.9 397.3,371.9 398.3,371.9 399.3,371.9 400.3,371.9 401.4,371.9 402.4,371.9 403.4,371.9 404.4,371.9 405.4,371.9 406.5,371.9 407.5,371.9 408.5,371.9 409.5,371.9 410.6,371.9 411.6,371.9 412.6,371.9 413.6,371.9 414.6,371.9 415.7,371.9 416.7,371.9 417.7,371.9 418.7,371.9 419.8,371.9 420.8,371.9 421.8,371.9 422.8,371.9 423.8,371.9 424.9,371.9 425.9,371.9 426.9,371.9 427.9,371.9 429.0,371.9 430.0,371.9 431.0,371.9 432.0,371.9 433.0,371.9 434.1,371.9 435.1,371.9 436.1,371.9 437.1,371.9 438.1,371.9 439.2,371.9 440.2,371.9 441.2,371.9 442.2,371.9 443.3,371.9 444.3,371.9 445.3,371.9 446.3,371.9 447.3,371.9 448.4,371.9 449.4,371.9 450.4,371.9 451.4,371.9 452.5,371.9 453.5,371.9 454.5,371.9 455.5,371.9 456.5,371.9 457.6,371.9 458.6,371.9 459.6,371.9 460.6,371.9 461.7,371.9 462.7,371.9 463.7,371.9 464.7,371.9 465.7,371.9 466.8,371.9 467.8,371.9 468.8,371.9 469.8,371.9 470.9,371.9 471.9,371.9 472.9,371.9 473.9,371.9 474.9,371.9 476.0,371.9 477.0,371.9 478.0,371.9 479.0,371.9 480.1,371.9 481.1,371.9 482.1,371.9 483.1,371.9 484.1,371.9 485.2,371.9 486.2,371.9 487.2,371.9 488.2,371.9 489.2,371.9 490.3,371.9 491.3,371.9 492.3,371.9 493.3,371.9 494.4,371.9 495.4,371.9 496.4,371.9 497.4,371.9 498.4,371.9 499.5,371.9 500.5,371.9 501.5,371.9 502.5,371.9 503.6,371.9 504.6,371.9 505.6,371.9 506.6,371.9 507.6,371.9 508.7,371.9 509.7,371.9 510.7,371.9 511.7,371.9 512.8,371.9 513.8,371.9 514.8,371.9 515.8,371.9 516.8,371.9 517.9,371.9 518.9,371.9 519.9,371.9 520.9,371.9 522.0,371.9 523.0,371.9 524.0,371.9 525.0,371.9 526.0,371.9 527.1,371.9 528.1,371.9 529.1,371.9 530.1,371.9 531.1,371.9 532.2,371.9 533.2,371.9 534.2,371.9 535.2,371.9 536.3,371.9 537.3,371.9 538.3,371.9 539.3,371.9 540.3,371.9 541.4,371.9 542.4,371.9 543.4,371.9 544.4,371.9 545.5,371.9 546.5,371.9 547.5,371.9 548.5,371.9 549.5,371.9 550.6,371.9 551.6,371.9 552.6,371.9 553.6,371.9 554.7,371.9 555.7,371.9 556.7,371.9 557.7,371.9 558.7,371.9 559.8,371.9 560.8,371.9 561.8,371.9 562.8,371.9 563.9,371.9 564.9,371.9 565.9,371.9 566.9,371.9 567.9,371.9 569.0,371.9 570.0,371.9 571.0,371.9" fill="none" stroke="#008000" stroke-width="1.1"/>
<clipPath id="cp2"><rect x="656.5" y="154.5" width="416.0" height="260.0"/></clipPath>
<path d="M658.0 361.1l6.6 6.6M658.0 367.7l6.6 -6.6M658.2 386.3l6.6 6.6M658.2 392.9l6.6 -6.6M660.2 347.3l6.6 6.6M660.2 353.9l6.6 -6.6M660.7 362.9l6.6 6.6M660.7 369.6l6.6 -6.6M663.0 376.1l6.6 6.6M663.0 382.7l6.6 -6.6M663.6 366.7l6.6 6.6M663.6 373.3l6.6 -6.6M665.5 372.9l6.6 6.6M665.5 379.6l6.6 -6.6M666.1 354.2l6.6 6.6M666.1 360.8l6.6 -6.6M667.3 364.8l6.6 6.6M667.3 371.4l6.6 -6.6M669.2 379.8l6.6 6.6M669.2 386.4l6.6 -6.6M671.1 349.2l6.6 6.6M671.1 355.8l6.6 -6.6M672.3 356.7l6.6 6.6M672.3 363.3l6.6 -6.6M673.6 361.7l6.6 6.6M673.6 368.3l6.6 -6.6M676.7 372.9l6.6 6.6M676.7 379.6l6.6 -6.6M677.3 376.7l6.6 6.6M677.3 383.3l6.6 -6.6M678.0 396.7l6.6 6.6M678.0 403.3l6.6 -6.6M680.2 344.8l6.6 6.6M680.2 351.4l6.6 -6.6M681.7 377.3l6.6 6.6M681.7 383.9l6.6 -6.6M683.0 396.7l6.6 6.6M683.0 403.3l6.6 -6.6M684.2 385.4l6.6 6.6M684.2 392.1l6.6 -6.6M684.8 361.1l6.6 6.6M684.8 367.7l6.6 -6.6M686.7 376.1l6.6 6.6M686.7 382.7l6.6 -6.6M689.2 347.3l6.6 6.6M689.2 353.9l6.6 -6.6M689.8 376.1l6.6 6.6M689.8 382.7l6.6 -6.6M691.7 365.4l6.6 6.6M691.7 372.1l6.6 -6.6M692.3 379.8l6.6 6.6M692.3 386.4l6.6 -6.6M694.8 375.4l6.6 6.6M694.8 382.1l6.6 -6.6M696.7 357.3l6.6 6.6M696.7 363.9l6.6 -6.6M698.6 366.1l6.6 6.6M698.6 372.7l6.6 -6.6M700.5 352.9l6.6 6.6M700.5 359.6l6.6 -6.6M701.1 375.4l6.6 6.6M701.1 382.1l6.6 -6.6M703.6 371.7l6.6 6.6M703.6 378.3l6.6 -6.6M704.2 387.9l6.6 6.6M704.2 394.6l6.6 -6.6M705.5 376.7l6.6 6.6M705.5 383.3l6.6 -6.6M707.3 382.9l6.6 6.6M707.3 389.6l6.6 -6.6M708.0 363.6l6.6 6.6M708.0 370.2l6.6 -6.6M710.5 319.8l6.6 6.6M710.5 326.4l6.6 -6.6M711.7 403.6l6.6 6.6M711.7 410.2l6.6 -6.6M713.6 364.2l6.6 6.6M713.6 370.8l6.6 -6.6M714.8 347.3l6.6 6.6M714.8 353.9l6.6 -6.6M716.1 334.8l6.6 6.6M716.1 341.4l6.6 -6.6M718.6 373.6l6.6 6.6M718.6 380.2l6.6 -6.6M719.8 337.3l6.6 6.6M719.8 343.9l6.6 -6.6M721.3 366.7l6.6 6.6M721.3 373.3l6.6 -6.6M723.2 314.2l6.6 6.6M723.2 320.8l6.6 -6.6M724.8 347.3l6.6 6.6M724.8 353.9l6.6 -6.6M727.3 326.1l6.6 6.6M727.3 332.7l6.6 -6.6M729.2 349.2l6.6 6.6M729.2 355.8l6.6 -6.6M730.2 325.2l6.6 6.6M730.2 331.8l6.6 -6.6M732.3 351.1l6.6 6.6M732.3 357.7l6.6 -6.6M734.2 348.6l6.6 6.6M734.2 355.2l6.6 -6.6M737.0 307.3l6.6 6.6M737.0 313.9l6.6 -6.6M738.6 351.7l6.6 6.6M738.6 358.3l6.6 -6.6M741.3 355.4l6.6 6.6M741.3 362.1l6.6 -6.6M743.2 297.9l6.6 6.6M743.2 304.6l6.6 -6.6M745.5 334.8l6.6 6.6M745.5 341.4l6.6 -6.6M748.6 331.1l6.6 6.6M748.6 337.7l6.6 -6.6M750.2 326.1l6.6 6.6M750.2 332.7l6.6 -6.6M755.2 335.2l6.6 6.6M755.2 341.8l6.6 -6.6M758.0 312.3l6.6 6.6M758.0 318.9l6.6 -6.6M760.2 302.9l6.6 6.6M760.2 309.6l6.6 -6.6M763.2 330.2l6.6 6.6M763.2 336.8l6.6 -6.6M766.3 322.3l6.6 6.6M766.3 328.9l6.6 -6.6M769.2 311.7l6.6 6.6M769.2 318.3l6.6 -6.6M772.3 312.3l6.6 6.6M772.3 318.9l6.6 -6.6M774.8 313.6l6.6 6.6M774.8 320.2l6.6 -6.6M778.0 306.7l6.6 6.6M778.0 313.3l6.6 -6.6M782.3 321.1l6.6 6.6M782.3 327.7l6.6 -6.6M786.1 306.7l6.6 6.6M786.1 313.3l6.6 -6.6M789.2 314.2l6.6 6.6M789.2 320.8l6.6 -6.6M792.2 282.0l6.6 6.6M792.2 288.6l6.6 -6.6M795.9 268.0l6.6 6.6M795.9 274.6l6.6 -6.6M800.0 237.2l6.6 6.6M800.0 243.8l6.6 -6.6M804.2 248.0l6.6 6.6M804.2 254.6l6.6 -6.6M808.0 271.0l6.6 6.6M808.0 277.6l6.6 -6.6M812.0 291.0l6.6 6.6M812.0 297.6l6.6 -6.6M817.2 306.2l6.6 6.6M817.2 312.8l6.6 -6.6M821.2 246.2l6.6 6.6M821.2 252.8l6.6 -6.6M826.2 249.2l6.6 6.6M826.2 255.8l6.6 -6.6M831.0 268.0l6.6 6.6M831.0 274.6l6.6 -6.6M836.2 283.0l6.6 6.6M836.2 289.6l6.6 -6.6M841.2 236.2l6.6 6.6M841.2 242.8l6.6 -6.6M845.9 262.0l6.6 6.6M845.9 268.6l6.6 -6.6M852.0 256.2l6.6 6.6M852.0 262.8l6.6 -6.6M858.0 270.9l6.6 6.6M858.0 277.5l6.6 -6.6M863.0 292.2l6.6 6.6M863.0 298.8l6.6 -6.6M870.0 279.2l6.6 6.6M870.0 285.8l6.6 -6.6M876.2 228.4l6.6 6.6M876.2 235.0l6.6 -6.6M883.4 281.0l6.6 6.6M883.4 287.6l6.6 -6.6M889.2 195.4l6.6 6.6M889.2 202.0l6.6 -6.6M897.0 270.2l6.6 6.6M897.0 276.8l6.6 -6.6M904.2 192.0l6.6 6.6M904.2 198.6l6.6 -6.6M912.0 265.2l6.6 6.6M912.0 271.8l6.6 -6.6M919.2 157.2l6.6 6.6M919.2 163.8l6.6 -6.6M928.0 288.4l6.6 6.6M928.0 295.0l6.6 -6.6M936.2 259.2l6.6 6.6M936.2 265.8l6.6 -6.6M945.0 258.0l6.6 6.6M945.0 264.6l6.6 -6.6M954.2 328.0l6.6 6.6M954.2 334.6l6.6 -6.6M964.2 155.0l6.6 6.6M964.2 161.6l6.6 -6.6M973.4 230.0l6.6 6.6M973.4 236.6l6.6 -6.6M984.0 236.2l6.6 6.6M984.0 242.8l6.6 -6.6M994.2 265.2l6.6 6.6M994.2 271.8l6.6 -6.6M1005.0 202.0l6.6 6.6M1005.0 208.6l6.6 -6.6M1017.0 260.4l6.6 6.6M1017.0 267.0l6.6 -6.6M1029.2 234.0l6.6 6.6M1029.2 240.6l6.6 -6.6M1041.2 329.2l6.6 6.6M1041.2 335.8l6.6 -6.6M1054.2 297.2l6.6 6.6M1054.2 303.8l6.6 -6.6M1066.7 223.4l6.6 6.6M1066.7 230.0l6.6 -6.6" fill="none" stroke="#0000ff" stroke-width="0.6" clip-path="url(#cp2)"/>
<text x="158.5" y="427.8" text-anchor="middle" letter-spacing="-0.25" font-family="DejaVu Sans, Liberation Sans, sans-serif" font-size="12">0</text>
<text x="227.7" y="427.8" text-anchor="middle" letter-spacing="-0.25" font-family="DejaVu Sans, Liberation Sans, sans-serif" font-size="12">10000</text>
<text x="296.8" y="427.8" text-anchor="middle" letter-spacing="-0.25" font-family="DejaVu Sans, Liberation Sans, sans-serif" font-size="12">20000</text>
<text x="366.0" y="427.8" text-anchor="middle" letter-spacing="-0.25" font-family="DejaVu Sans, Liberation Sans, sans-serif" font-size="12">30000</text>
<text x="435.2" y="427.8" text-anchor="middle" letter-spacing="-0.25" font-family="DejaVu Sans, Liberation Sans, sans-serif" font-size="12">40000</text>
<text x="504.3" y="427.8" text-anchor="middle" letter-spacing="-0.25" font-family="DejaVu Sans, Liberation Sans, sans-serif" font-size="12">50000</text>
<text x="573.5" y="427.8" text-anchor="middle" letter-spacing="-0.25" font-family="DejaVu Sans, Liberation Sans, sans-serif" font-size="12">60000</text>
<text x="152.6" y="417.8" text-anchor="end" letter-spacing="-0.4" font-family="DejaVu Sans, Liberation Sans, sans-serif" font-size="12">0.80</text>
<text x="152.6" y="365.8" text-anchor="end" letter-spacing="-0.4" font-family="DejaVu Sans, Liberation Sans, sans-serif" font-size="12">0.85</text>
<text x="152.6" y="313.8" text-anchor="end" letter-spacing="-0.4" font-family="DejaVu Sans, Liberation Sans, sans-serif" font-size="12">0.90</text>
<text x="152.6" y="261.8" text-anchor="end" letter-spacing="-0.4" font-family="DejaVu Sans, Liberation Sans, sans-serif" font-size="12">0.95</text>
<text x="152.6" y="209.8" text-anchor="end" letter-spacing="-0.4" font-family="DejaVu Sans, Liberation Sans, sans-serif" font-size="12">1.00</text>
<text x="152.6" y="157.8" text-anchor="end" letter-spacing="-0.4" font-family="DejaVu Sans, Liberation Sans, sans-serif" font-size="12">1.05</text>
<path d="M158.5 414.5v-4.5M158.5 154.5v4.5M227.5 414.5v-4.5M227.5 154.5v4.5M296.5 414.5v-4.5M296.5 154.5v4.5M366.5 414.5v-4.5M366.5 154.5v4.5M435.5 414.5v-4.5M435.5 154.5v4.5M504.5 414.5v-4.5M504.5 154.5v4.5M573.5 414.5v-4.5M573.5 154.5v4.5M158.5 414.5h4.5M573.5 414.5h-4.5M158.5 362.5h4.5M573.5 362.5h-4.5M158.5 310.5h4.5M573.5 310.5h-4.5M158.5 258.5h4.5M573.5 258.5h-4.5M158.5 206.5h4.5M573.5 206.5h-4.5M158.5 154.5h4.5M573.5 154.5h-4.5" stroke="#000" stroke-width="1" fill="none" shape-rendering="crispEdges"/>
<rect x="158.5" y="154.5" width="415.0" height="260.0" fill="none" stroke="#000" stroke-width="1.1"/>
<text x="366.0" y="446.3" text-anchor="middle" font-family="DejaVu Sans, Liberation Sans, sans-serif" font-size="12">spin echo length (A)</text>
<text transform="translate(117.9 284.5) rotate(-90)" text-anchor="middle" font-family="DejaVu Sans, Liberation Sans, sans-serif" font-size="12">polarization (P/P0)</text>
<text x="656.5" y="427.8" text-anchor="middle" letter-spacing="-0.25" font-family="DejaVu Sans, Liberation Sans, sans-serif" font-size="12">0</text>
<text x="725.8" y="427.8" text-anchor="middle" letter-spacing="-0.25" font-family="DejaVu Sans, Liberation Sans, sans-serif" font-size="12">10000</text>
<text x="795.2" y="427.8" text-anchor="middle" letter-spacing="-0.25" font-family="DejaVu Sans, Liberation Sans, sans-serif" font-size="12">20000</text>
<text x="864.5" y="427.8" text-anchor="middle" letter-spacing="-0.25" font-family="DejaVu Sans, Liberation Sans, sans-serif" font-size="12">30000</text>
<text x="933.8" y="427.8" text-anchor="middle" letter-spacing="-0.25" font-family="DejaVu Sans, Liberation Sans, sans-serif" font-size="12">40000</text>
<text x="1003.2" y="427.8" text-anchor="middle" letter-spacing="-0.25" font-family="DejaVu Sans, Liberation Sans, sans-serif" font-size="12">50000</text>
<text x="1072.5" y="427.8" text-anchor="middle" letter-spacing="-0.25" font-family="DejaVu Sans, Liberation Sans, sans-serif" font-size="12">60000</text>
<text x="652.6" y="417.8" text-anchor="end" letter-spacing="-0.4" font-family="DejaVu Sans, Liberation Sans, sans-serif" font-size="12">−2</text>
<text x="652.6" y="374.8" text-anchor="end" letter-spacing="-0.4" font-family="DejaVu Sans, Liberation Sans, sans-serif" font-size="12">0</text>
<text x="652.6" y="330.8" text-anchor="end" letter-spacing="-0.4" font-family="DejaVu Sans, Liberation Sans, sans-serif" font-size="12">2</text>
<text x="652.6" y="287.8" text-anchor="end" letter-spacing="-0.4" font-family="DejaVu Sans, Liberation Sans, sans-serif" font-size="12">4</text>
<text x="652.6" y="244.8" text-anchor="end" letter-spacing="-0.4" font-family="DejaVu Sans, Liberation Sans, sans-serif" font-size="12">6</text>
<text x="652.6" y="200.8" text-anchor="end" letter-spacing="-0.4" font-family="DejaVu Sans, Liberation Sans, sans-serif" font-size="12">8</text>
<text x="652.6" y="157.8" text-anchor="end" letter-spacing="-0.4" font-family="DejaVu Sans, Liberation Sans, sans-serif" font-size="12">10</text>
<path d="M656.5 414.5v-4.5M656.5 154.5v4.5M725.5 414.5v-4.5M725.5 154.5v4.5M795.5 414.5v-4.5M795.5 154.5v4.5M864.5 414.5v-4.5M864.5 154.5v4.5M933.5 414.5v-4.5M933.5 154.5v4.5M1003.5 414.5v-4.5M1003.5 154.5v4.5M1072.5 414.5v-4.5M1072.5 154.5v4.5M656.5 414.5h4.5M1072.5 414.5h-4.5M656.5 371.5h4.5M1072.5 371.5h-4.5M656.5 327.5h4.5M1072.5 327.5h-4.5M656.5 284.5h4.5M1072.5 284.5h-4.5M656.5 241.5h4.5M1072.5 241.5h-4.5M656.5 197.5h4.5M1072.5 197.5h-4.5M656.5 154.5h4.5M1072.5 154.5h-4.5" stroke="#000" stroke-width="1" fill="none" shape-rendering="crispEdges"/>
<rect x="656.5" y="154.5" width="416.0" height="260.0" fill="none" stroke="#000" stroke-width="1.1"/>
<text x="864.5" y="446.3" text-anchor="middle" font-family="DejaVu Sans, Liberation Sans, sans-serif" font-size="12">spin echo length (A)</text>
<text transform="translate(625.2 284.5) rotate(-90)" text-anchor="middle" font-family="DejaVu Sans, Liberation Sans, sans-serif" font-size="12">residuals (P/P0)</text>
<text x="661.0" y="410.9" font-family="DejaVu Sans, Liberation Sans, sans-serif" font-size="12">chisq=11.130(19)</text>
</svg>
<div class="a" style="left:9px;top:447px;width:240px;height:33px"><svg width="240" height="33" viewBox="0 0 240 33" style="display:block;overflow:visible"><defs>
<linearGradient id="hd" x1="0" y1="0" x2="1" y2="0"><stop offset="0" stop-color="#f3a32a"/><stop offset=".5" stop-color="#fbd271"/><stop offset="1" stop-color="#f5b43d"/></linearGradient>
<linearGradient id="hb" x1="0" y1="0" x2="1" y2="0"><stop offset="0" stop-color="#cfd9db"/><stop offset=".4" stop-color="#fff"/><stop offset="1" stop-color="#dfe6e8"/></linearGradient>
<radialGradient id="cg" cx=".5" cy=".45" r=".55"><stop offset="0" stop-color="#909090"/><stop offset=".75" stop-color="#7a7a7a"/><stop offset="1" stop-color="#585858"/></radialGradient>
<linearGradient id="fl" x1="0" y1="0" x2="1" y2="1"><stop offset="0" stop-color="#4b8aac"/><stop offset=".5" stop-color="#2f6d8e"/><stop offset="1" stop-color="#285f7e"/></linearGradient>
<linearGradient id="fs" x1="0" y1="0" x2="1" y2="0"><stop offset="0" stop-color="#8fa3ae"/><stop offset="1" stop-color="#c5d0d6"/></linearGradient>
</defs><rect x="9.600000000000001" y="6.600000000000023" width="2.8" height="6" fill="#f6c680" stroke="#b85a50" stroke-width=".8"/><path d="M9.60 15.00L16.30 8.60L22.60 15.00V27.30H9.60Z" fill="url(#hb)" stroke="#9bb2b6" stroke-width="1"/><path d="M12.60 26.60V17.60Q12.60 15.40 15.90 15.40Q19.20 15.40 19.20 17.60V26.60Z" fill="url(#hd)" stroke="#b5624a" stroke-width=".9"/><path d="M5.60 17.20L16.40 6.60L26.60 16.40" fill="none" stroke="#b22c48" stroke-width="2.7" stroke-linejoin="miter"/><circle cx="46.90" cy="16.20" r="10.2" fill="url(#cg)" stroke="#5e5e5e" stroke-width="1"/><path d="M40.30 16.40L46.70 9.80V13.40H52.90V19.20H46.70V22.80Z" fill="#dedede"/><circle cx="77.75" cy="16.20" r="10.2" fill="url(#cg)" stroke="#5e5e5e" stroke-width="1"/><path d="M84.35 16.40L77.95 9.80V13.40H71.75V19.20H77.95V22.80Z" fill="#dedede"/><g fill="#1f6a8b"><rect x="115.45" y="8.50" width="2.1" height="15.60"/><rect x="108.70" y="15.25" width="15.60" height="2.1"/><polygon points="116.50 5.30 113.30 9.50 119.70 9.50"/><polygon points="116.50 27.30 113.30 23.10 119.70 23.10"/><polygon points="105.50 16.30 109.70 13.10 109.70 19.50"/><polygon points="127.50 16.30 123.30 13.10 123.30 19.50"/></g><rect x="140.60" y="13.30" width="17" height="12.2" fill="#fbfdfe" stroke="#a5d3df" stroke-width="1"/><path d="M150.20 12.40L159.20 7.20" stroke="#f0a13c" stroke-width="3.2" stroke-linecap="round" fill="none"/><path d="M150.60 11.60L158.80 6.80" stroke="#f8c982" stroke-width="1" stroke-linecap="round" fill="none"/><circle cx="143.90" cy="16.60" r="6.3" fill="#d5ebf2" fill-opacity=".92" stroke="#a9d6e3" stroke-width="1"/><path d="M141.60 15.40H148.60M141.60 17.70H148.60M141.60 20.00H148.00" stroke="#3a8797" stroke-width="1.3" fill="none"/><rect x="177.50" y="5.50" width="19" height="21" fill="#fff" stroke="#858585" stroke-width="1"/><rect x="179.60" y="8.20" width="15" height="15.6" fill="#4b6fc2"/><rect x="181.90" y="11.70" width="10.4" height="8.9" fill="#fff"/><path d="M182.60 17.60Q184.60 13.20 186.40 15.40Q188.30 18.00 189.60 16.60L191.80 14.00" stroke="#111" stroke-width="1" fill="none"/><g fill="#35d535" stroke="#1fa01f" stroke-width=".5"><polygon points="187.10 5.40 184.60 9.20 189.60 9.20"/><polygon points="187.10 27.20 184.60 23.20 189.60 23.20"/><polygon points="176.20 16.10 180.20 13.60 180.20 18.60"/><polygon points="198.00 16.10 194.00 13.60 194.00 18.60"/></g><rect x="206.30" y="5.60" width="23.3" height="22.2" rx="2.6" fill="url(#fl)"/><rect x="210.50" y="6.20" width="15.2" height="8.6" fill="#b7c6cf"/><rect x="210.50" y="6.00" width="15.2" height="1.7" fill="#b5673a"/><path d="M214.40 10.20H224.20M214.40 12.60H224.20" stroke="#2c5f7e" stroke-width="1.2" fill="none"/><rect x="212.80" y="20.20" width="10.6" height="7.0" fill="url(#fs)"/><rect x="214.40" y="21.00" width="2.6" height="5.6" fill="#17384f"/><circle cx="208.00" cy="8.00" r=".7" fill="#dfe9ee"/><circle cx="227.90" cy="8.00" r=".7" fill="#dfe9ee"/></svg></div>
<span class="t" style="left:22.10px;top:490.98px;font-size:14.5px;color:#000;;letter-spacing:0.094px">Parameters</span>
<span class="t" style="left:137.10px;top:490.98px;font-size:14.5px;color:#000;;letter-spacing:0.292px">Summary</span>
<span class="t" style="left:220.60px;top:490.98px;font-size:14.5px;color:#000;;letter-spacing:0.798px">Log</span>
<span class="t" style="left:262.10px;top:490.98px;font-size:14.5px;color:#000;;letter-spacing:0.105px">Convergence</span>
<span class="t" style="left:368.10px;top:490.98px;font-size:14.5px;color:#000;;letter-spacing:0.296px">Uncertainty</span>
<span class="t" style="left:466.10px;top:490.98px;font-size:14.5px;color:#000;;letter-spacing:0.330px">Correlations</span>
<span class="t" style="left:567.10px;top:490.98px;font-size:14.5px;color:#000;;letter-spacing:0.093px">Parameter Trace</span>
<span class="t" style="left:698.60px;top:490.98px;font-size:14.5px;color:#000;;letter-spacing:0.403px">Model Uncertainty</span>
<div class="a" style="left:114px;top:495px;width:14px;height:14px"><svg width="14" height="14" viewBox="0 0 14 14" style="display:block;overflow:visible"><path d="M2.6 2.6L11.4 11.4M11.4 2.6L2.6 11.4" stroke="#6a6a6a" stroke-width="1.15" fill="none"/></svg></div>
<span class="t" style="left:17.40px;top:520.68px;font-size:14.5px;color:#000;;letter-spacing:1.000px">Model</span>
<span class="t" style="left:197.40px;top:520.68px;font-size:14.5px;color:#000;;letter-spacing:0.200px">Parameter</span>
<span class="t" style="left:347.40px;top:520.68px;font-size:14.5px;color:#000;;letter-spacing:0.371px">Value</span>
<span class="t" style="left:420.40px;top:520.68px;font-size:14.5px;color:#000;;letter-spacing:0.831px">Minimum</span>
<span class="t" style="left:493.60px;top:520.68px;font-size:14.5px;color:#000;;letter-spacing:0.032px">Maximu...</span>
<span class="t" style="left:566.60px;top:520.68px;font-size:14.5px;color:#000;;letter-spacing:-0.057px">Fit?</span>
<div class="a" style="left:17px;top:552px;width:16px;height:10px"><svg width="16" height="10" viewBox="0 0 16 10" style="display:block;overflow:visible"><path d="M1.9 1.6H13.7L7.8 8.2Z" fill="#3d9df6" stroke="#1f2a55" stroke-width=".9" stroke-linejoin="round"/></svg></div>
<span class="t" style="left:35.80px;top:547.68px;font-size:14.5px;color:#fff;;letter-spacing:0.975px">Model</span>
<span class="t" style="left:51.60px;top:569.48px;font-size:14.5px;color:#000;;letter-spacing:0.156px">M0:sld</span>
<span class="t" style="left:193.60px;top:569.48px;font-size:14.5px;color:#000;;letter-spacing:0.156px">M0:sld</span>
<span class="t" style="left:343.40px;top:569.48px;font-size:14.5px;color:#000;">0.0</span>
<span class="t" style="left:562.60px;top:569.48px;font-size:14.5px;color:#000;;letter-spacing:0.853px">No</span>
<span class="t" style="left:51.60px;top:591.48px;font-size:14.5px;color:#000;;letter-spacing:0.045px">M0:sld_solvent</span>
<span class="t" style="left:193.60px;top:591.48px;font-size:14.5px;color:#000;;letter-spacing:0.045px">M0:sld_solvent</span>
<span class="t" style="left:343.40px;top:591.48px;font-size:14.5px;color:#000;">0.0</span>
<span class="t" style="left:562.60px;top:591.48px;font-size:14.5px;color:#000;;letter-spacing:0.853px">No</span>
<span class="t" style="left:51.60px;top:613.48px;font-size:14.5px;color:#000;;letter-spacing:0.391px">background</span>
<span class="t" style="left:193.60px;top:613.48px;font-size:14.5px;color:#000;;letter-spacing:0.391px">background</span>
<span class="t" style="left:343.40px;top:613.48px;font-size:14.5px;color:#000;">0.0</span>
<span class="t" style="left:562.60px;top:613.48px;font-size:14.5px;color:#000;;letter-spacing:0.853px">No</span>
<span class="t" style="left:51.60px;top:635.48px;font-size:14.5px;color:#000;;letter-spacing:0.443px">mphi:sld</span>
<span class="t" style="left:193.60px;top:635.48px;font-size:14.5px;color:#000;;letter-spacing:0.443px">mphi:sld</span>
<span class="t" style="left:343.40px;top:635.48px;font-size:14.5px;color:#000;">0.0</span>
<span class="t" style="left:562.60px;top:635.48px;font-size:14.5px;color:#000;;letter-spacing:0.853px">No</span>
<span class="t" style="left:51.60px;top:657.48px;font-size:14.5px;color:#000;;letter-spacing:0.187px">mphi:sld_solvent</span>
<span class="t" style="left:193.60px;top:657.48px;font-size:14.5px;color:#000;;letter-spacing:0.187px">mphi:sld_solvent</span>
<span class="t" style="left:343.40px;top:657.48px;font-size:14.5px;color:#000;">0.0</span>
<span class="t" style="left:562.60px;top:657.48px;font-size:14.5px;color:#000;;letter-spacing:0.853px">No</span>
<span class="t" style="left:51.60px;top:679.48px;font-size:14.5px;color:#000;;letter-spacing:0.288px">mtheta:sld</span>
<span class="t" style="left:193.60px;top:679.48px;font-size:14.5px;color:#000;;letter-spacing:0.288px">mtheta:sld</span>
<span class="t" style="left:343.40px;top:679.48px;font-size:14.5px;color:#000;">0.0</span>
<span class="t" style="left:562.60px;top:679.48px;font-size:14.5px;color:#000;;letter-spacing:0.853px">No</span>
<span class="t" style="left:51.60px;top:701.48px;font-size:14.5px;color:#000;;letter-spacing:0.170px">mtheta:sld_solvent</span>
<span class="t" style="left:193.60px;top:701.48px;font-size:14.5px;color:#000;;letter-spacing:0.170px">mtheta:sld_solvent</span>
<span class="t" style="left:343.40px;top:701.48px;font-size:14.5px;color:#000;">0.0</span>
<span class="t" style="left:562.60px;top:701.48px;font-size:14.5px;color:#000;;letter-spacing:0.853px">No</span>
<span class="t" style="left:51.60px;top:723.48px;font-size:14.5px;color:#000;;letter-spacing:1.020px">phi</span>
<span class="t" style="left:193.60px;top:723.48px;font-size:14.5px;color:#000;;letter-spacing:1.020px">phi</span>
<span class="t" style="left:343.40px;top:723.48px;font-size:14.5px;color:#000;">0.0855</span>
<span class="t" style="left:416.40px;top:723.48px;font-size:14.5px;color:#000;">0.001</span>
<span class="t" style="left:489.40px;top:723.48px;font-size:14.5px;color:#000;">0.5</span>
<span class="t" style="left:562.60px;top:723.48px;font-size:14.5px;color:#000;;letter-spacing:-0.078px">Yes</span>
<span class="t" style="left:51.60px;top:745.48px;font-size:14.5px;color:#000;;letter-spacing:0.220px">radius</span>
<span class="t" style="left:193.60px;top:745.48px;font-size:14.5px;color:#000;;letter-spacing:0.220px">radius</span>
<span class="t" style="left:343.40px;top:745.48px;font-size:14.5px;color:#000;">10000.0</span>
<span class="t" style="left:416.40px;top:745.48px;font-size:14.5px;color:#000;">100</span>
<span class="t" style="left:489.40px;top:745.48px;font-size:14.5px;color:#000;">100000</span>
<span class="t" style="left:562.60px;top:745.48px;font-size:14.5px;color:#000;;letter-spacing:-0.078px">Yes</span>
<span class="t" style="left:51.60px;top:767.48px;font-size:14.5px;color:#000;;letter-spacing:0.139px">radius_pd</span>
<span class="t" style="left:193.60px;top:767.48px;font-size:14.5px;color:#000;;letter-spacing:0.139px">radius_pd</span>
<span class="t" style="left:343.40px;top:767.48px;font-size:14.5px;color:#000;">0.0</span>
<span class="t" style="left:562.60px;top:767.48px;font-size:14.5px;color:#000;;letter-spacing:0.853px">No</span>
<span class="t" style="left:51.60px;top:789.48px;font-size:14.5px;color:#000;;letter-spacing:-0.053px">radius_pd_n</span>
<span class="t" style="left:193.60px;top:789.48px;font-size:14.5px;color:#000;;letter-spacing:-0.053px">radius_pd_n</span>
<span class="t" style="left:343.40px;top:789.48px;font-size:14.5px;color:#000;">35.0</span>
<span class="t" style="left:562.60px;top:789.48px;font-size:14.5px;color:#000;;letter-spacing:0.853px">No</span>
<span class="t" style="left:51.60px;top:811.48px;font-size:14.5px;color:#000;;letter-spacing:0.040px">radius_pd_nsigma</span>
<span class="t" style="left:193.60px;top:811.48px;font-size:14.5px;color:#000;;letter-spacing:0.040px">radius_pd_nsigma</span>
<span class="t" style="left:343.40px;top:811.48px;font-size:14.5px;color:#000;">3.0</span>
<span class="t" style="left:562.60px;top:811.48px;font-size:14.5px;color:#000;;letter-spacing:0.853px">No</span>
<span class="t" style="left:51.60px;top:833.48px;font-size:14.5px;color:#000;;letter-spacing:0.060px">scale</span>
<span class="t" style="left:193.60px;top:833.48px;font-size:14.5px;color:#000;;letter-spacing:0.427px">(phi * (1 - phi))</span>
<span class="t" style="left:343.40px;top:833.48px;font-size:14.5px;color:#000;">0.07819</span>
<span class="t" style="left:51.60px;top:855.48px;font-size:14.5px;color:#000;;letter-spacing:0.677px">sld</span>
<span class="t" style="left:193.60px;top:855.48px;font-size:14.5px;color:#000;;letter-spacing:0.677px">sld</span>
<span class="t" style="left:343.40px;top:855.48px;font-size:14.5px;color:#000;">1.41</span>
<span class="t" style="left:562.60px;top:855.48px;font-size:14.5px;color:#000;;letter-spacing:0.853px">No</span>
<span class="t" style="left:51.60px;top:877.48px;font-size:14.5px;color:#000;;letter-spacing:0.105px">sld_solvent</span>
<span class="t" style="left:193.60px;top:877.48px;font-size:14.5px;color:#000;;letter-spacing:0.105px">sld_solvent</span>
<span class="t" style="left:343.40px;top:877.48px;font-size:14.5px;color:#000;">2.7</span>
<span class="t" style="left:562.60px;top:877.48px;font-size:14.5px;color:#000;;letter-spacing:0.853px">No</span>
<span class="t" style="left:51.60px;top:899.48px;font-size:14.5px;color:#000;;letter-spacing:0.351px">up:angle</span>
<span class="t" style="left:193.60px;top:899.48px;font-size:14.5px;color:#000;;letter-spacing:0.351px">up:angle</span>
<span class="t" style="left:343.40px;top:899.48px;font-size:14.5px;color:#000;">0.0</span>
<span class="t" style="left:562.60px;top:899.48px;font-size:14.5px;color:#000;;letter-spacing:0.853px">No</span>
<span class="t" style="left:51.60px;top:921.48px;font-size:14.5px;color:#000;;letter-spacing:0.085px">up:frac_f</span>
<span class="t" style="left:193.60px;top:921.48px;font-size:14.5px;color:#000;;letter-spacing:0.085px">up:frac_f</span>
<span class="t" style="left:343.40px;top:921.48px;font-size:14.5px;color:#000;">0.0</span>
<span class="t" style="left:562.60px;top:921.48px;font-size:14.5px;color:#000;;letter-spacing:0.853px">No</span>
<span class="t" style="left:51.60px;top:943.48px;font-size:14.5px;color:#000;;letter-spacing:0.059px">up:frac_i</span>
<span class="t" style="left:193.60px;top:943.48px;font-size:14.5px;color:#000;;letter-spacing:0.059px">up:frac_i</span>
<span class="t" style="left:343.40px;top:943.48px;font-size:14.5px;color:#000;">0.0</span>
<span class="t" style="left:562.60px;top:943.48px;font-size:14.5px;color:#000;;letter-spacing:0.853px">No</span>
</div>
</body></html>
